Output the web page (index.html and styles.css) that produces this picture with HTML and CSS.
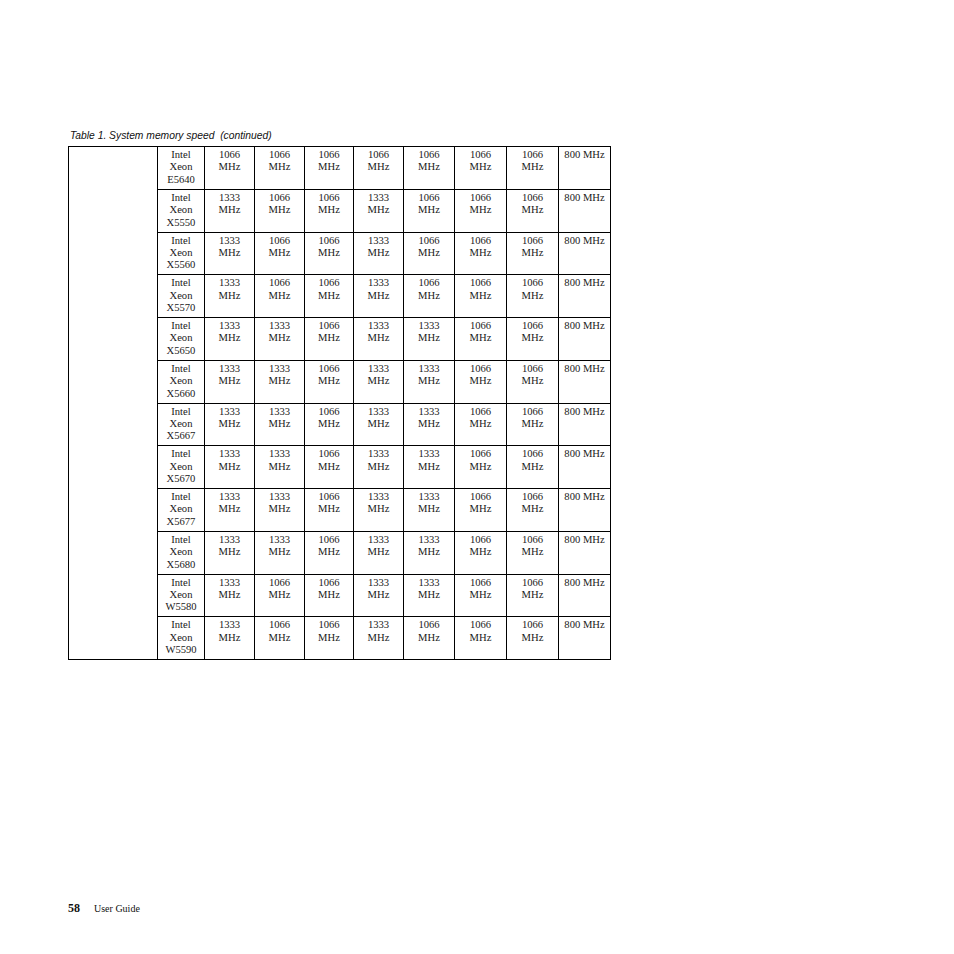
FILE: index.html
```html
<!DOCTYPE html>
<html>
<head>
<meta charset="utf-8">
<link rel="stylesheet" href="styles.css">
</head>
<body>
<div class="page">
  <div class="caption">Table 1. System memory speed&nbsp; (continued)</div>
  <table class="mem">
    <colgroup>
      <col class="c0"><col class="c1"><col class="c2"><col class="c3"><col class="c4"><col class="c5"><col class="c6"><col class="c7"><col class="c8"><col class="c9">
    </colgroup>
    <tbody>
      <tr><td class="blank" rowspan="12"></td><td>Intel<br>Xeon<br>E5640</td><td>1066<br>MHz</td><td>1066<br>MHz</td><td>1066<br>MHz</td><td>1066<br>MHz</td><td>1066<br>MHz</td><td>1066<br>MHz</td><td>1066<br>MHz</td><td>800 MHz</td></tr>
      <tr><td>Intel<br>Xeon<br>X5550</td><td>1333<br>MHz</td><td>1066<br>MHz</td><td>1066<br>MHz</td><td>1333<br>MHz</td><td>1066<br>MHz</td><td>1066<br>MHz</td><td>1066<br>MHz</td><td>800 MHz</td></tr>
      <tr><td>Intel<br>Xeon<br>X5560</td><td>1333<br>MHz</td><td>1066<br>MHz</td><td>1066<br>MHz</td><td>1333<br>MHz</td><td>1066<br>MHz</td><td>1066<br>MHz</td><td>1066<br>MHz</td><td>800 MHz</td></tr>
      <tr><td>Intel<br>Xeon<br>X5570</td><td>1333<br>MHz</td><td>1066<br>MHz</td><td>1066<br>MHz</td><td>1333<br>MHz</td><td>1066<br>MHz</td><td>1066<br>MHz</td><td>1066<br>MHz</td><td>800 MHz</td></tr>
      <tr><td>Intel<br>Xeon<br>X5650</td><td>1333<br>MHz</td><td>1333<br>MHz</td><td>1066<br>MHz</td><td>1333<br>MHz</td><td>1333<br>MHz</td><td>1066<br>MHz</td><td>1066<br>MHz</td><td>800 MHz</td></tr>
      <tr><td>Intel<br>Xeon<br>X5660</td><td>1333<br>MHz</td><td>1333<br>MHz</td><td>1066<br>MHz</td><td>1333<br>MHz</td><td>1333<br>MHz</td><td>1066<br>MHz</td><td>1066<br>MHz</td><td>800 MHz</td></tr>
      <tr><td>Intel<br>Xeon<br>X5667</td><td>1333<br>MHz</td><td>1333<br>MHz</td><td>1066<br>MHz</td><td>1333<br>MHz</td><td>1333<br>MHz</td><td>1066<br>MHz</td><td>1066<br>MHz</td><td>800 MHz</td></tr>
      <tr><td>Intel<br>Xeon<br>X5670</td><td>1333<br>MHz</td><td>1333<br>MHz</td><td>1066<br>MHz</td><td>1333<br>MHz</td><td>1333<br>MHz</td><td>1066<br>MHz</td><td>1066<br>MHz</td><td>800 MHz</td></tr>
      <tr><td>Intel<br>Xeon<br>X5677</td><td>1333<br>MHz</td><td>1333<br>MHz</td><td>1066<br>MHz</td><td>1333<br>MHz</td><td>1333<br>MHz</td><td>1066<br>MHz</td><td>1066<br>MHz</td><td>800 MHz</td></tr>
      <tr><td>Intel<br>Xeon<br>X5680</td><td>1333<br>MHz</td><td>1333<br>MHz</td><td>1066<br>MHz</td><td>1333<br>MHz</td><td>1333<br>MHz</td><td>1066<br>MHz</td><td>1066<br>MHz</td><td>800 MHz</td></tr>
      <tr><td>Intel<br>Xeon<br>W5580</td><td>1333<br>MHz</td><td>1066<br>MHz</td><td>1066<br>MHz</td><td>1333<br>MHz</td><td>1333<br>MHz</td><td>1066<br>MHz</td><td>1066<br>MHz</td><td>800 MHz</td></tr>
      <tr><td>Intel<br>Xeon<br>W5590</td><td>1333<br>MHz</td><td>1066<br>MHz</td><td>1066<br>MHz</td><td>1333<br>MHz</td><td>1066<br>MHz</td><td>1066<br>MHz</td><td>1066<br>MHz</td><td>800 MHz</td></tr>
    </tbody>
  </table>
  <div class="footer"><span class="pnum">58</span><span class="ftitle">User Guide</span></div>
</div>
</body>
</html>
```

FILE: styles.css
```css
html, body {
  margin: 0;
  padding: 0;
  background: #ffffff;
}

.page {
  padding: 130px 0 0 68px;
  color: #1a1a1a;
}

.caption {
  font-family: "Liberation Sans", Arial, sans-serif;
  font-style: italic;
  font-size: 10.3px;
  line-height: 12px;
  padding-left: 2px;
  margin-bottom: 4px;
  color: #111;
}

.mem {
  border-collapse: collapse;
  table-layout: fixed;
  width: 543px;
  font-family: "Liberation Serif", "Times New Roman", serif;
  font-size: 10.6px;
  line-height: 12.4px;
  color: #1a1a1a;
}

.c0 { width: 89px; }
.c1 { width: 47px; }
.c2 { width: 50px; }
.c3 { width: 50px; }
.c4 { width: 49px; }
.c5 { width: 50px; }
.c6 { width: 51px; }
.c7 { width: 52px; }
.c8 { width: 52px; }
.c9 { width: 52px; }

.mem tr {
  height: 42.75px;
}

.mem td {
  border: 1px solid #000;
  vertical-align: top;
  text-align: center;
  padding: 2px 0 0 0;
  white-space: nowrap;
}

.footer {
  margin-top: 241px;
  display: flex;
  align-items: baseline;
  font-family: "Liberation Serif", "Times New Roman", serif;
  color: #111;
}

.pnum {
  font-weight: bold;
  font-size: 12px;
  width: 26px;
}

.ftitle {
  font-size: 10px;
}
```
